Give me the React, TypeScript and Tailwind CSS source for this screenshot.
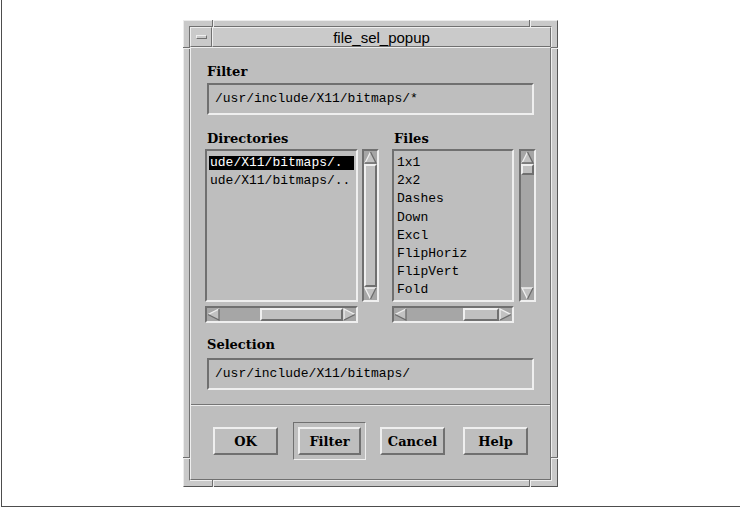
import React from "react";

const raised1 = "border border-t-[#efefef] border-l-[#efefef] border-r-[#707070] border-b-[#707070]";
const raised2 = "border-2 border-t-[#efefef] border-l-[#efefef] border-r-[#707070] border-b-[#707070]";
const sunken1 = "border border-t-[#707070] border-l-[#707070] border-r-[#efefef] border-b-[#efefef]";
const sunken2 = "border-2 border-t-[#707070] border-l-[#707070] border-r-[#efefef] border-b-[#efefef]";

const label = "font-['DejaVu_Serif',serif] font-bold text-[13px] leading-[15px] text-black";
const mono = "font-['Liberation_Mono',monospace] text-[13px] text-black";

const arrows = {
  up: { fill: "6.5,1 1,12 12,12", light: "M1 12 L6.5 1", dark: "M6.5 1 L12 12 L1 12" },
  down: { fill: "1,1 12,1 6.5,12", light: "M6.5 12 L1 1 L12 1", dark: "M12 1 L6.5 12" },
  left: { fill: "1,6.5 12,1 12,12", light: "M12 1 L1 6.5", dark: "M1 6.5 L12 12 L12 1" },
  right: { fill: "1,1 12,6.5 1,12", light: "M1 12 L1 1 L12 6.5", dark: "M12 6.5 L1 12" },
};

const Arrow: React.FC<{ dir: keyof typeof arrows }> = ({ dir }) => {
  const a = arrows[dir];
  return (
    <svg width="13" height="13" viewBox="0 0 13 13" className="block shrink-0">
      <polygon points={a.fill} fill="#c2c2c2" />
      <path d={a.light} stroke="#f0f0f0" strokeWidth="1.3" fill="none" />
      <path d={a.dark} stroke="#6c6c6c" strokeWidth="1.3" fill="none" />
    </svg>
  );
};

const VScroll: React.FC<{ full?: boolean }> = ({ full }) => (
  <div className={`${sunken2} w-[17px] h-[153px] bg-[#a6a6a6] flex flex-col`}>
    <Arrow dir="up" />
    <div className="flex-1 flex flex-col">
      {full ? (
        <div className={`${raised2} flex-1 bg-[#c0c0c0]`} />
      ) : (
        <div className={`${raised2} h-[11px] bg-[#c0c0c0]`} />
      )}
    </div>
    <Arrow dir="down" />
  </div>
);

const HScroll: React.FC<{ thumb: string }> = ({ thumb }) => (
  <div className={`${sunken2} h-[17px] mt-[4px] bg-[#a6a6a6] flex`}>
    <Arrow dir="left" />
    <div className="flex-1 flex justify-end">
      <div className={`${raised2} ${thumb} bg-[#c0c0c0]`} />
    </div>
    <Arrow dir="right" />
  </div>
);

const dirs = ["ude/X11/bitmaps/.", "ude/X11/bitmaps/.."];
const files = ["1x1", "2x2", "Dashes", "Down", "Excl", "FlipHoriz", "FlipVert", "Fold"];

const Button: React.FC<{ children: React.ReactNode; w?: string }> = ({ children, w = "w-[65px]" }) => (
  <div className={`${raised2} ${w} h-[28px] bg-[#bebebe] flex items-center justify-center ${label}`}>
    {children}
  </div>
);

export default function App() {
  return (
    <div className="w-[740px] h-[509px] bg-white">
      <div className="ml-px w-[739px] h-[507px] border-l border-b border-[#4d4d4d] pt-[20px] pl-[181px]">
        {/* window manager frame */}
        <div className="relative w-[375px] h-[467px] bg-[#c9c9c9] border border-t-[#ececec] border-l-[#ececec] border-r-[#555555] border-b-[#555555] p-[5px]">
          {/* resize handle marks */}
          <div className="absolute -top-px left-[28px] w-[2px] h-[7px] border-l border-l-[#707070] border-r border-r-[#efefef]" />
          <div className="absolute -top-px left-[345px] w-[2px] h-[7px] border-l border-l-[#707070] border-r border-r-[#efefef]" />
          <div className="absolute -bottom-px left-[28px] w-[2px] h-[7px] border-l border-l-[#707070] border-r border-r-[#efefef]" />
          <div className="absolute -bottom-px left-[345px] w-[2px] h-[7px] border-l border-l-[#707070] border-r border-r-[#efefef]" />
          <div className="absolute -left-px top-[26px] w-[7px] h-[2px] border-t border-t-[#707070] border-b border-b-[#efefef]" />
          <div className="absolute -left-px top-[436px] w-[7px] h-[2px] border-t border-t-[#707070] border-b border-b-[#efefef]" />
          <div className="absolute -right-px top-[26px] w-[7px] h-[2px] border-t border-t-[#707070] border-b border-b-[#efefef]" />
          <div className="absolute -right-px top-[436px] w-[7px] h-[2px] border-t border-t-[#707070] border-b border-b-[#efefef]" />

          <div className={`${sunken1} h-full flex flex-col`}>
            {/* title bar */}
            <div className="flex h-[20px] shrink-0">
              <div className={`${raised1} w-[22px] bg-[#cacaca] flex items-center justify-center`}>
                <div className={`${raised1} w-[11px] h-[4px]`} />
              </div>
              <div className={`${raised1} flex-1 bg-[#cacaca] flex items-center justify-center font-['Liberation_Sans',sans-serif] text-[15px] leading-none text-black`}>
                file_sel_popup
              </div>
            </div>

            {/* client area */}
            <div className={`${raised1} flex-1 bg-[#bebebe] flex flex-col`}>
              <div className="px-[14px] flex flex-col">
                <div className={`${label} pl-[2px] mt-[16px]`}>Filter</div>
                <div className={`${sunken2} mx-[2px] mt-[4px] h-[32px] pl-[6px] flex items-center ${mono}`}>
                  /usr/include/X11/bitmaps/*
                </div>

                <div className="flex mt-[16px]">
                  <div className="flex flex-col">
                    <div className={`${label} pl-[2px]`}>Directories</div>
                    <div className="flex mt-[3px] gap-[4px]">
                      <div className={`${sunken2} w-[153px] h-[153px] px-[2px] pt-[5px] overflow-hidden flex flex-col gap-[4.2px] ${mono}`}>
                        {dirs.map((d, i) => (
                          <div
                            key={d}
                            className={`h-[14px] leading-[14px] pl-[1px] whitespace-nowrap ${i === 0 ? "bg-black text-white" : ""}`}
                          >
                            {d}
                          </div>
                        ))}
                      </div>
                      <VScroll full />
                    </div>
                    <div className="w-[153px]">
                      <HScroll thumb="w-[83px]" />
                    </div>
                  </div>

                  <div className="flex flex-col ml-[13px]">
                    <div className={`${label} pl-[2px]`}>Files</div>
                    <div className="flex mt-[3px] gap-[5px]">
                      <div className={`${sunken2} w-[122px] h-[153px] px-[3px] pt-[5px] overflow-hidden flex flex-col gap-[4.2px] ${mono}`}>
                        {files.map((f) => (
                          <div key={f} className="h-[14px] leading-[14px] whitespace-nowrap">
                            {f}
                          </div>
                        ))}
                      </div>
                      <VScroll />
                    </div>
                    <div className="w-[122px]">
                      <HScroll thumb="w-[36px]" />
                    </div>
                  </div>
                </div>

                <div className={`${label} pl-[2px] mt-[14px]`}>Selection</div>
                <div className={`${sunken2} mx-[2px] mt-[6px] h-[32px] pl-[6px] flex items-center ${mono}`}>
                  /usr/include/X11/bitmaps/
                </div>
              </div>

              <div className="mt-[14px] border-t border-t-[#757575] border-b border-b-[#ececec]" />

              <div className="flex items-center mt-[16px]">
                <div className="ml-[22px]">
                  <Button>OK</Button>
                </div>
                <div className={`${sunken1} ml-[15px] p-[4px]`}>
                  <Button w="w-[63px]">Filter</Button>
                </div>
                <div className="ml-[14px]">
                  <Button>Cancel</Button>
                </div>
                <div className="ml-[18px]">
                  <Button>Help</Button>
                </div>
              </div>
            </div>
          </div>
        </div>
      </div>
    </div>
  );
}
